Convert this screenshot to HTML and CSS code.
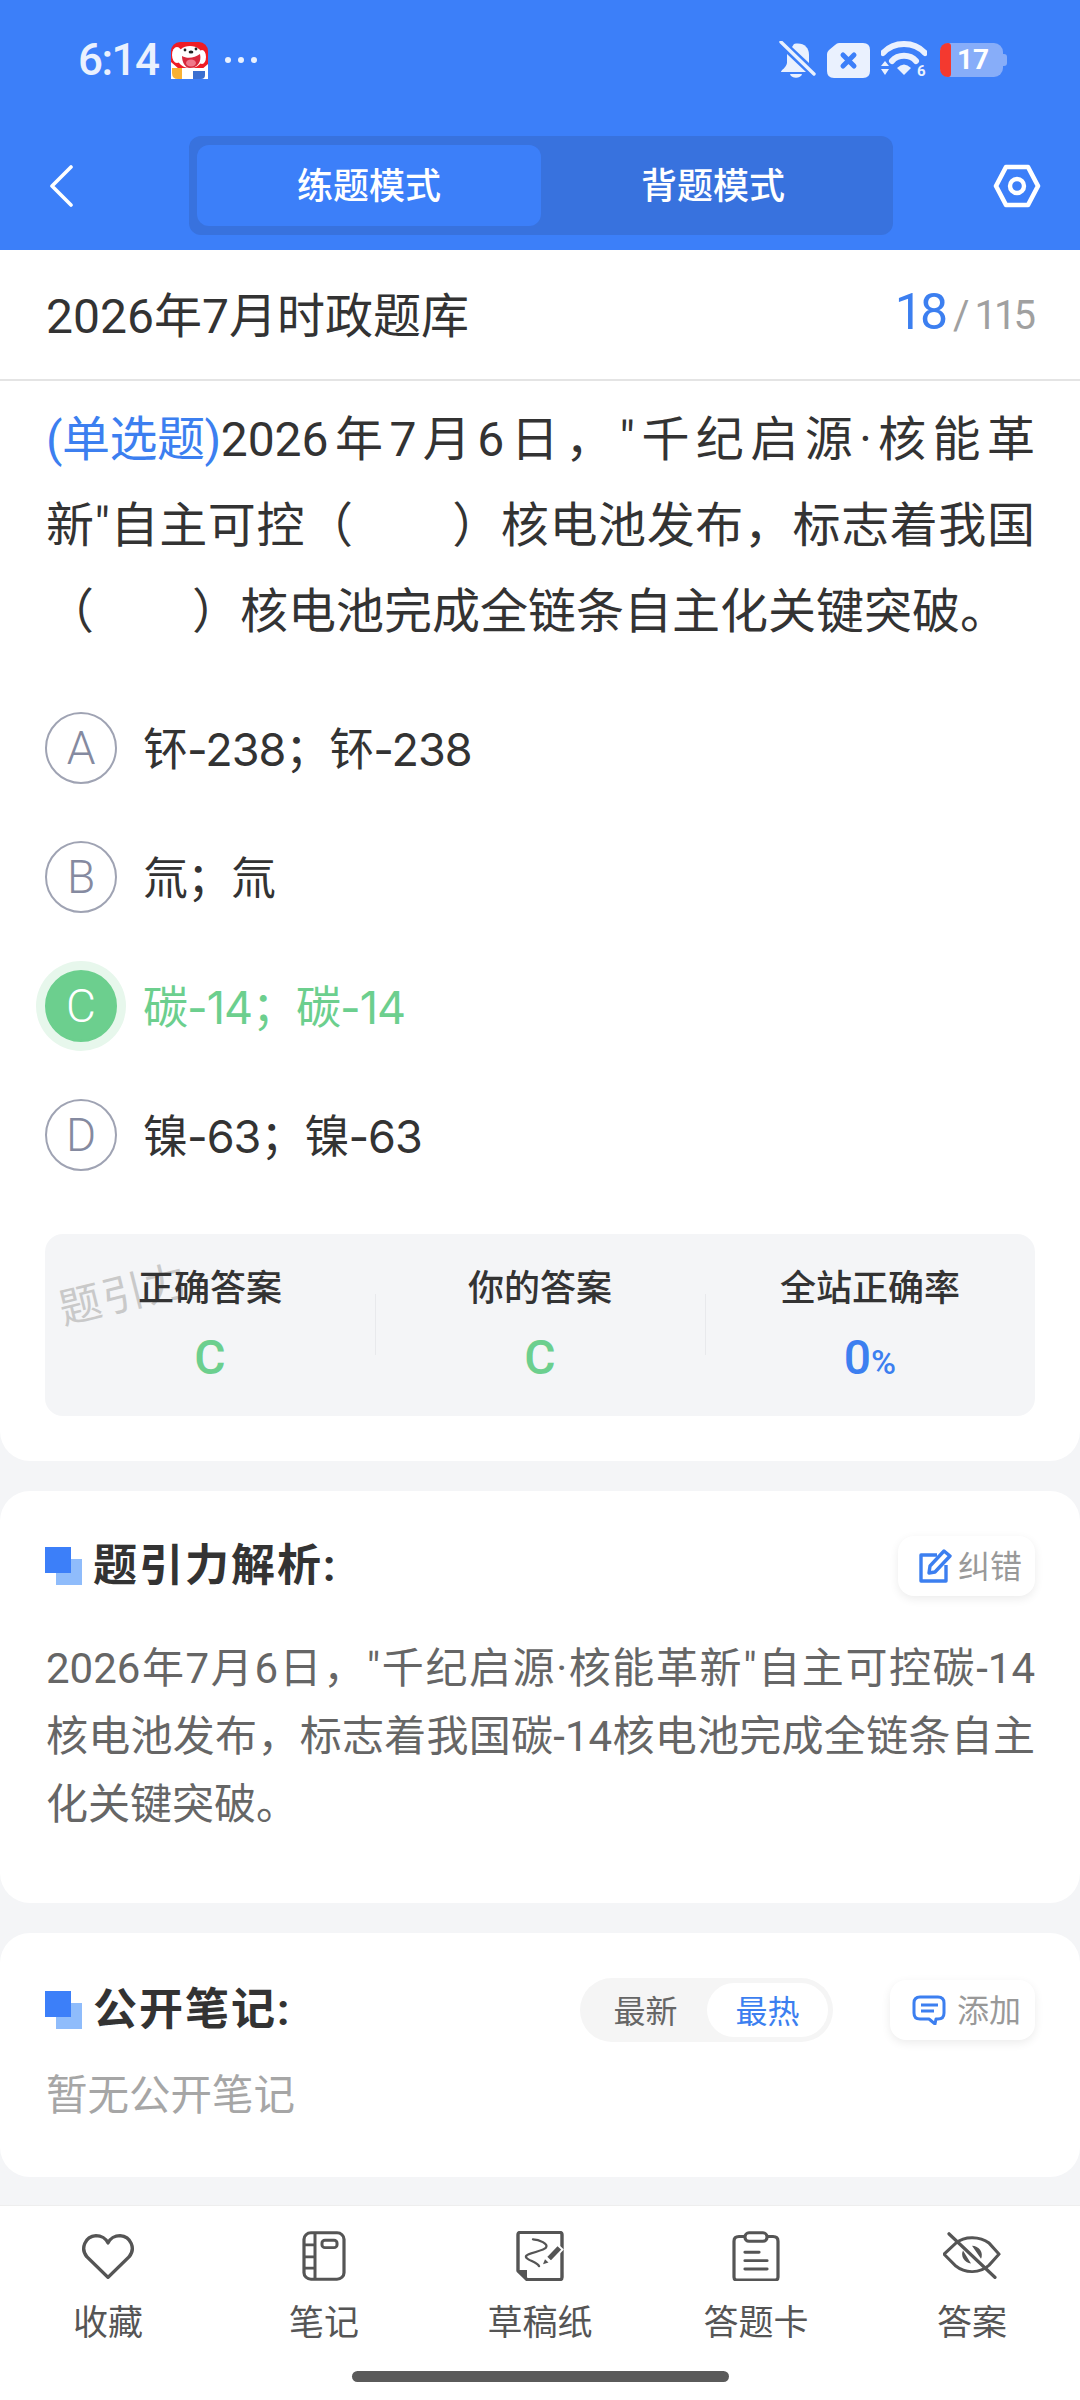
FILE: index.html
```html
<!DOCTYPE html>
<html lang="zh-CN">
<head>
    <meta charset="UTF-8">
    <meta name="viewport" content="width=device-width, initial-scale=1.0">
    <title>题引力</title>
    <link rel="stylesheet" href="styles.css">
</head>
<body>
    <!-- Blue header: status bar and mode switch -->
    <header class="header">
        <div class="status-bar">
            <div class="status-left">
                <span class="time">6:14</span>
                <svg class="app-icon" width="37" height="37" viewBox="0 0 37 37">
                    <rect width="37" height="37" rx="9" fill="#ee1c25"/>
                    <path d="M0 20 L8 27 L0 30 Z M37 22 L30 28 L37 30 Z" fill="#fff"/>
                    <ellipse cx="6" cy="13" rx="5" ry="8" fill="#fff"/>
                    <ellipse cx="31" cy="15" rx="4" ry="7" fill="#fff"/>
                    <ellipse cx="19" cy="15" rx="13" ry="11" fill="#fff"/>
                    <path d="M11 14 C16 17 24 16 29 12 C31 20 26 26 19 26 C14 26 11 20 11 14 Z" fill="#d8283c"/>
                    <ellipse cx="20" cy="21" rx="5" ry="3.5" fill="#f0788a"/>
                    <circle cx="14" cy="8" r="1.4" fill="#222"/>
                    <circle cx="25" cy="7" r="1.4" fill="#222"/>
                    <ellipse cx="20" cy="10" rx="2.4" ry="1.6" fill="#222"/>
                    <rect x="0" y="26" width="37" height="11" fill="#fff"/>
                    <path d="M1 26 L11 26 L11 37 L7 37 Q1 37 1 31 Z" fill="#f8b133"/>
                    <path d="M22 29 L34 29 L34 33 Q34 37 30 37 L22 37 Z" fill="#3b6fd0"/>
                </svg>
                <div class="status-dots"><i></i><i></i><i></i></div>
            </div>
            <div class="status-right">
                <!-- bell off -->
                <svg width="37" height="38" viewBox="0 0 37 38">
                    <path d="M15 3 C24 1 30 6 30 14 L30 22 L13 6 Z" fill="#eaf1fe"/>
                    <path d="M8 13 L27 31 L2 31 C2 29 7 27 8 22 Z" fill="#eaf1fe"/>
                    <path d="M11 33 L23 33 C22 38 12 38 11 33 Z" fill="#eaf1fe"/>
                    <path d="M2 1 L35 33" stroke="#eaf1fe" stroke-width="3.4" stroke-linecap="round"/>
                </svg>
                <!-- sim with cross -->
                <svg width="43" height="35" viewBox="0 0 43 35">
                    <path d="M12 0 L36 0 Q43 0 43 7 L43 28 Q43 35 36 35 L7 35 Q0 35 0 28 L0 11 Q0 9 2 7 L8 2 Q10 0 12 0 Z" fill="#eaf1fe"/>
                    <path d="M16 12 L27 23 M27 12 L16 23" stroke="#3c7ff9" stroke-width="5" stroke-linecap="round"/>
                </svg>
                <!-- wifi -->
                <svg width="46" height="38" viewBox="0 0 46 38">
                    <path d="M2 12 C13 0 33 0 44 12" fill="none" stroke="#eaf1fe" stroke-width="6" stroke-linecap="round"/>
                    <path d="M11 20 C17 13 29 13 35 20" fill="none" stroke="#eaf1fe" stroke-width="6" stroke-linecap="round"/>
                    <path d="M16 27 Q23 20 30 27 L23 34 Z" fill="#eaf1fe"/>
                    <path d="M0 25 L4 20 L8 25 Z M0 28 L8 28 L4 34 Z" fill="#eaf1fe"/>
                    <text x="36" y="35" class="wifi-six">6</text>
                </svg>
                <div class="battery">
                    <span class="battery-low"></span>
                    <span class="battery-num">17</span>
                    <span class="battery-cap"></span>
                </div>
            </div>
        </div>
        <nav class="nav-row">
            <svg class="back" width="24" height="44" viewBox="0 0 24 44">
                <path d="M22 3 L3 22 L22 41" fill="none" stroke="#fff" stroke-width="3.6" stroke-linecap="round" stroke-linejoin="round"/>
            </svg>
            <div class="mode-switch">
                <div class="mode-tab mode-active">练题模式</div>
                <div class="mode-tab">背题模式</div>
            </div>
            <svg class="hex" width="48" height="44" viewBox="0 0 48 44">
                <path d="M13 3 L35 3 L45 22 L35 41 L13 41 L3 22 Z" fill="none" stroke="#fff" stroke-width="4.6" stroke-linejoin="round"/>
                <circle cx="24" cy="22" r="7" fill="none" stroke="#fff" stroke-width="4.4"/>
            </svg>
        </nav>
    </header>

    <main class="content">
        <!-- Question card -->
        <section class="question-card">
            <div class="title-row">
                <div class="paper-title">2026年7月时政题库</div>
                <div class="progress"><span class="progress-now">18</span><span class="progress-slash">/</span><span class="progress-total">115</span></div>
            </div>
            <div class="question-body">
                <p class="question"><span class="q-type">(单选题)</span>2026年7月6日，"千纪启源·核能革新"自主可控（&emsp;&emsp;）核电池发布，标志着我国（&emsp;&emsp;）核电池完成全链条自主化关键突破。</p>
                <ul class="options">
                    <li class="option"><span class="option-letter">A</span><span class="option-text">钚-238；钚-238</span></li>
                    <li class="option"><span class="option-letter">B</span><span class="option-text">氚；氚</span></li>
                    <li class="option option-right"><span class="option-letter">C</span><span class="option-text">碳-14；碳-14</span></li>
                    <li class="option"><span class="option-letter">D</span><span class="option-text">镍-63；镍-63</span></li>
                </ul>
                <div class="stats">
                    <div class="watermark">题引力</div>
                    <div class="stat">
                        <div class="stat-label">正确答案</div>
                        <div class="stat-value green">C</div>
                    </div>
                    <div class="stat">
                        <div class="stat-label">你的答案</div>
                        <div class="stat-value green">C</div>
                    </div>
                    <div class="stat">
                        <div class="stat-label">全站正确率</div>
                        <div class="stat-value blue">0<small>%</small></div>
                    </div>
                </div>
            </div>
        </section>

        <!-- Analysis card -->
        <section class="card analysis">
            <div class="card-head">
                <h2 class="card-title"><span class="squares"></span>题引力解析:</h2>
                <div class="mini-btn">
                    <svg width="34" height="36" viewBox="0 0 34 36">
                        <path d="M19 7 L3 7 L3 33 L28 33 L28 17" fill="none" stroke="#3c7ff0" stroke-width="3.4" stroke-linejoin="round"/>
                        <path d="M11 25 L12 18 L26 3 L32 8 L17 24 Z" fill="none" stroke="#3c7ff0" stroke-width="3.4" stroke-linejoin="round"/>
                    </svg>
                    <span class="mini-label">纠错</span>
                </div>
            </div>
            <p class="analysis-text">2026年7月6日，"千纪启源·核能革新"自主可控碳-14核电池发布，标志着我国碳-14核电池完成全链条自主化关键突破。</p>
        </section>

        <!-- Public notes card -->
        <section class="card notes">
            <div class="card-head">
                <h2 class="card-title"><span class="squares"></span>公开笔记:</h2>
                <div class="notes-tools">
                    <div class="sort-switch">
                        <span class="sort-item">最新</span>
                        <span class="sort-item sort-active">最热</span>
                    </div>
                    <div class="mini-btn mini-btn-wide">
                        <svg width="34" height="30" viewBox="0 0 34 30">
                            <path d="M8 2 L26 2 Q32 2 32 8 L32 18 Q32 24 26 24 L24 24 L23 29 L17 24 L8 24 Q2 24 2 18 L2 8 Q2 2 8 2 Z" fill="none" stroke="#3c7ff0" stroke-width="3" stroke-linejoin="round"/>
                            <path d="M9 10 L26 10 M9 16 L22 16" stroke="#3c7ff0" stroke-width="3"/>
                        </svg>
                        <span class="mini-label">添加</span>
                    </div>
                </div>
            </div>
            <p class="notes-empty">暂无公开笔记</p>
        </section>
    </main>

    <!-- Bottom toolbar -->
    <footer class="toolbar">
        <div class="tool-row">
            <div class="tool">
                <svg width="54" height="50" viewBox="0 0 54 54" preserveAspectRatio="none">
                    <path d="M27 50 L6 28 C-1 19 4 6 15 5 C20 5 25 8 27 13 C29 8 34 5 39 5 C50 6 55 19 48 28 Z" fill="none" stroke="#555" stroke-width="3.4" stroke-linejoin="round"/>
                </svg>
                <span>收藏</span>
            </div>
            <div class="tool">
                <svg width="54" height="50" viewBox="0 0 54 54" preserveAspectRatio="none">
                    <rect x="7" y="2" width="40" height="50" rx="7" fill="none" stroke="#555" stroke-width="3.2"/>
                    <path d="M18 2 L18 52 M7 15 L18 15 M7 28 L18 28 M7 40 L18 40" stroke="#555" stroke-width="3"/>
                    <rect x="25" y="10" width="15" height="8" rx="3" fill="none" stroke="#555" stroke-width="3"/>
                </svg>
                <span>笔记</span>
            </div>
            <div class="tool">
                <svg width="54" height="50" viewBox="0 0 54 54" preserveAspectRatio="none">
                    <path d="M14 52.5 L47 52.5 Q49 52.5 49 50 L49 4 Q49 1.5 47 1.5 L7 1.5 Q5 1.5 5 4 L5 43 Z" fill="none" stroke="#555" stroke-width="3.4" stroke-linejoin="round"/>
                    <path d="M5 42 L14 42 L14 53 Z" fill="#555"/>
                    <path d="M20 9 C26 9 36 14 33 18 C30 22 12 24 13 28 C14 32 24 33 26 38" fill="none" stroke="#555" stroke-width="2.4" stroke-linecap="round"/>
                    <path d="M33 28 L44.5 15 L49.5 20 L38 33 Z" fill="#555" stroke="#fff" stroke-width="2"/>
                    <path d="M32 30.5 L35.5 34 L30 36 Z" fill="#555"/>
                </svg>
                <span>草稿纸</span>
            </div>
            <div class="tool">
                <svg width="54" height="50" viewBox="0 0 54 54" preserveAspectRatio="none">
                    <path d="M15 6 L10 6 Q5 6 5 11 L5 50 Q5 53 8 53 L46 53 Q49 53 49 50 L49 11 Q49 6 44 6 L39 6" fill="none" stroke="#555" stroke-width="3.2" stroke-linecap="round"/>
                    <rect x="16" y="2" width="22" height="9" rx="4" fill="none" stroke="#555" stroke-width="3.2"/>
                    <path d="M16 23 L30 23 M16 32 L38 32 M16 41 L38 41" stroke="#555" stroke-width="3.2" stroke-linecap="round"/>
                </svg>
                <span>答题卡</span>
            </div>
            <div class="tool">
                <svg width="58" height="50" viewBox="0 0 58 54" preserveAspectRatio="none">
                    <path d="M13 13 C22 5 37 6 46 13 L56 25 L46 37 C37 46 22 46 13 38 L1 25 Z" fill="none" stroke="#555" stroke-width="3.2" stroke-linejoin="round"/>
                    <path d="M6 3 L52 50" stroke="#555" stroke-width="3.4" stroke-linecap="round"/>
                    <path d="M29 16 A10 10 0 0 1 38 30 Z M28 35 A10 10 0 0 1 20 21 Z" fill="#555"/>
                </svg>
                <span>答案</span>
            </div>
        </div>
        <div class="home-bar"></div>
    </footer>
</body>
</html>
```

FILE: styles.css
```css
/* General styling */

* {
    box-sizing: border-box;
}

html, body {
    margin: 0;
    padding: 0;
}

body {
    width: 1080px;
    height: 2400px;
    overflow: hidden;
    display: flex;
    flex-direction: column;
    background-color: #f4f5f7;
    font-family: Roboto, "Noto Sans CJK SC", sans-serif;
    color: #333;
}

p, ul, h2 {
    margin: 0;
    padding: 0;
}

/* Header */
.header {
    height: 250px;
    background-color: #3c7ff9;
    color: #fff;
}

.status-bar {
    height: 120px;
    padding: 0 77px 0 78px;
    display: flex;
    justify-content: space-between;
    align-items: center;
}

.status-left {
    display: flex;
    align-items: center;
}

.time {
    font-size: 44px;
    font-weight: 500;
    letter-spacing: -1.5px;
    color: #eaf1fe;
    width: 93px;
}

.status-dots {
    display: flex;
    gap: 7px;
    margin-left: 17px;
}

.status-dots i {
    width: 6px;
    height: 6px;
    border-radius: 50%;
    background-color: #eaf1fe;
}

.status-right {
    display: flex;
    align-items: center;
    gap: 11px;
}

.wifi-six {
    font-size: 15px;
    font-weight: 700;
    fill: #eaf1fe;
}

.battery {
    width: 63px;
    height: 34px;
    margin-left: 2px;
    background-color: #87adf9;
    border-radius: 9px;
    position: relative;
    overflow: visible;
    display: flex;
    align-items: center;
    padding-left: 17px;
}

.battery-low {
    position: absolute;
    left: 0;
    top: 0;
    width: 11px;
    height: 34px;
    background-color: #f4392f;
    border-radius: 8px 3px 3px 8px;
}

.battery-num {
    font-size: 28px;
    font-weight: 700;
    color: #fff;
    line-height: 34px;
}

.battery-cap {
    position: absolute;
    right: -4px;
    top: 11px;
    width: 4px;
    height: 12px;
    background-color: #87adf9;
    border-radius: 0 3px 3px 0;
}

.nav-row {
    height: 130px;
    padding: 16px 39px 15px 49px;
    display: flex;
    align-items: center;
}

.back {
    margin-right: 116px;
}

.mode-switch {
    width: 704px;
    height: 99px;
    padding: 9px 8px;
    background-color: #3872de;
    border-radius: 12px;
    display: flex;
}

.hex {
    margin-left: auto;
}

.mode-tab {
    flex: 1;
    display: flex;
    align-items: center;
    justify-content: center;
    padding-bottom: 5px;
    font-size: 36px;
    font-weight: 500;
    border-radius: 12px;
}

.mode-active {
    background-color: #3c7ff9;
}

/* Question card */
.content {
    flex: 1;
    overflow: hidden;
    display: flex;
    flex-direction: column;
    gap: 30px;
}

.question-card {
    background-color: #fff;
    border-radius: 0 0 30px 30px;
    height: 1211px;
}

.title-row {
    height: 131px;
    padding: 0 45px 5px 46px;
    border-bottom: 2px solid #e4e4e4;
    display: flex;
    align-items: center;
    justify-content: space-between;
}

.paper-title {
    font-size: 48px;
    color: #333;
}

.progress {
    display: flex;
    align-items: baseline;
    color: #a0a0a0;
    font-size: 40px;
}

.progress-now {
    font-size: 50px;
    letter-spacing: -3px;
    color: #3c7ff0;
}

.progress-slash {
    margin: 0 5px 0 8px;
}

.progress-total {
    letter-spacing: -3px;
    margin-right: 2px;
}

.question-body {
    padding: 16px 45px 0 46px;
}

.question {
    font-size: 48px;
    line-height: 86px;
    text-align: justify;
    color: #333;
}

.q-type {
    display: inline-block;
    letter-spacing: -0.5px;
    color: #3c7ff0;
}

.options {
    list-style: none;
    margin-top: 57px;
    display: flex;
    flex-direction: column;
    gap: 57px;
}

.option {
    height: 72px;
    display: flex;
    align-items: center;
    color: #333;
}

.option-text {
    padding-bottom: 4px;
    font-family: Inter, "Noto Sans CJK SC", sans-serif;
    font-size: 45px;
    letter-spacing: -1px;
}

.option-letter {
    width: 72px;
    height: 72px;
    margin-right: 26px;
    margin-left: -1px;
    border: 2px solid #9fa3b3;
    border-radius: 50%;
    display: flex;
    align-items: center;
    justify-content: center;
    font-size: 46px;
    font-weight: 300;
    color: #858aa0;
}

.option-right {
    color: #6ccf8e;
}

.option-right .option-letter {
    background-color: #6ccf8e;
    border-color: #6ccf8e;
    color: #fff;
    box-shadow: 0 0 0 9px #e7f7ec;
}

.stats {
    position: relative;
    height: 182px;
    margin: 63px 0 0 -1px;
    background-color: #f4f5f7;
    border-radius: 18px;
    display: flex;
    overflow: hidden;
}

.stat {
    flex: 1;
    position: relative;
    text-align: center;
    padding-top: 32px;
}

.stat + .stat::before {
    content: "";
    position: absolute;
    left: 0;
    top: 60px;
    height: 61px;
    width: 1px;
    background-color: #e8e9ec;
}

.stat-label {
    font-size: 36px;
    font-weight: 500;
    line-height: 46px;
    color: #333;
}

.stat-value {
    margin-top: 18px;
    font-size: 48px;
    font-weight: 500;
    line-height: 56px;
}

.stat-value small {
    font-size: 34px;
}

.green {
    color: #6ccf8e;
}

.blue {
    color: #3c7ff0;
}

/* faint brand mark under the labels */
.watermark {
    position: absolute;
    left: 12px;
    top: 26px;
    font-size: 42px;
    letter-spacing: 2px;
    color: #c9c9c9;
    transform: rotate(-14deg);
}

/* Cards below the question */
.card {
    background-color: #fff;
    border-radius: 30px;
    padding: 0 45px 0 46px;
}

.analysis {
    height: 412px;
    padding-top: 45px;
}

.notes {
    height: 244px;
    padding-top: 45px;
}

.card-head {
    display: flex;
    align-items: center;
    justify-content: space-between;
}

.card-title {
    font-size: 44px;
    font-weight: 700;
    line-height: 60px;
    color: #333;
    display: flex;
    align-items: center;
    letter-spacing: 2px;
}

.squares {
    position: relative;
    width: 37px;
    height: 38px;
    margin: 0 11px 0 -1px;
    background:
        linear-gradient(#3c7ff9, #3c7ff9) left top / 26px 26px no-repeat,
        linear-gradient(#8fbcfb, #8fbcfb) right bottom / 26px 26px no-repeat;
}

.mini-btn {
    height: 60px;
    padding: 0 13px 0 20px;
    background-color: #fff;
    border-radius: 16px;
    box-shadow: 0 3px 10px rgba(0, 0, 0, 0.08);
    display: flex;
    align-items: center;
    gap: 6px;
    color: #999;
}

.mini-btn-wide {
    padding: 0 14px 0 22px;
    gap: 11px;
}

.mini-label {
    padding-bottom: 4px;
    font-size: 32px;
}

.analysis-text {
    margin-top: 39px;
    font-size: 42px;
    line-height: 68px;
    text-align: justify;
    color: #666;
}

.notes-tools {
    display: flex;
    align-items: center;
    gap: 57px;
}

.sort-switch {
    width: 253px;
    height: 64px;
    padding: 5px;
    background-color: #f5f5f5;
    border-radius: 32px;
    display: flex;
    justify-content: space-between;
}

.sort-item {
    width: 121px;
    display: flex;
    align-items: center;
    justify-content: center;
    padding-bottom: 3px;
    font-size: 32px;
    color: #666;
    border-radius: 27px;
}

.sort-active {
    background-color: #fff;
    color: #3c7ff0;
}

.notes-empty {
    margin-top: 24px;
    font-size: 41.5px;
    line-height: 60px;
    color: #a6a6a6;
}

/* Bottom toolbar */
.toolbar {
    height: 195px;
    background-color: #fff;
    border-top: 1px solid #eeeeee;
    display: flex;
    flex-direction: column;
    align-items: center;
}

.tool-row {
    width: 100%;
    padding-top: 25px;
    display: grid;
    grid-template-columns: repeat(5, 1fr);
}

.tool {
    display: flex;
    flex-direction: column;
    align-items: center;
    font-size: 35px;
    line-height: 46px;
    color: #555;
}

.tool svg {
    margin-bottom: 20px;
}

.home-bar {
    width: 377px;
    height: 11px;
    margin-top: 24px;
    border-radius: 6px;
    background-color: #5a5a5a;
}
```
